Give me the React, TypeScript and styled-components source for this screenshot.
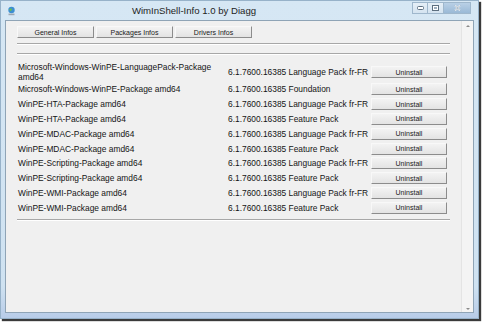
import React from 'react';
import styled, {createGlobalStyle} from 'styled-components';

const GlobalStyle = createGlobalStyle`
  html, body {
    margin: 0;
    padding: 0;
    background: #ffffff;
  }
  body {
    font-family: "Liberation Sans", Arial, sans-serif;
    color: #141414;
  }
`;

const Desktop = styled.div`
  width: 484px;
  height: 325px;
  overflow: hidden;
  background: #ffffff;
`;

const Window = styled.div`
  width: 479px;
  height: 319px;
  box-sizing: border-box;
  display: flex;
  flex-direction: column;
  background: linear-gradient(180deg, #d6e7f4 0%, #cfe2f1 90%, #b8cce8 100%);
  border: 1px solid #97b2c9;
  box-shadow: 2px 2px 1px #3a3a3a;
`;

const TitleBar = styled.div`
  height: 19px;
  display: flex;
  align-items: center;
  padding-left: 6px;
`;

const Title = styled.div`
  flex: 1;
  text-align: center;
  font-size: 9.6px;
  color: #1e1e1e;
  padding-right: 40px;
`;

const CaptionGroup = styled.div`
  display: flex;
  align-self: flex-start;
  margin-top: 1px;
  margin-right: 7px;
`;

const CaptionButton = styled.div<{$close?: boolean}>`
  width: ${p => (p.$close ? 27 : 16)}px;
  height: 12px;
  box-sizing: border-box;
  display: flex;
  align-items: center;
  justify-content: center;
  background: ${p => (p.$close ? 'linear-gradient(#b9d0e6, #9ab9d6)' : 'linear-gradient(#e6eff7, #d4e3f0)')};
  border: 1px solid #9fb7cc;
  border-left-width: 0;
  &:first-child {
    border-left-width: 1px;
  }
`;

const Client = styled.div`
  flex: 1;
  margin: 0 4px 5px 4px;
  display: flex;
  background: #f0f0f0;
  border: 1px solid #8fa4b6;
`;

const Content = styled.div`
  flex: 1;
  padding: 5px 0 0 11px;
`;

const TabRow = styled.div`
  display: flex;
  gap: 2px;
`;

const ClassicButton = styled.div<{$w: number}>`
  width: ${p => p.$w}px;
  height: 12px;
  box-sizing: border-box;
  display: flex;
  align-items: center;
  justify-content: center;
  font-size: 7px;
  color: #1a1a1a;
  background: linear-gradient(#f3f3f3, #e3e3e3);
  border-top: 1px solid #f8f8f8;
  border-left: 1px solid #f8f8f8;
  border-right: 1px solid #8c8c8c;
  border-bottom: 1px solid #8c8c8c;
`;

const Separator = styled.div<{$top: number}>`
  width: 433px;
  margin-top: ${p => p.$top}px;
  border-top: 1px solid #a7a7a7;
  border-bottom: 1px solid #ffffff;
`;

const PackageGrid = styled.div`
  display: grid;
  grid-template-columns: 211px 143px 76px;
  grid-auto-rows: minmax(14.8px, auto);
  align-items: center;
  margin-top: 7px;
  font-size: 8.4px;
`;

const NameCell = styled.div`
  line-height: 10px;
  padding-left: 1px;
  padding-right: 4px;
`;

const Word = styled.span`
  white-space: nowrap;
`;

const VersionCell = styled.div`
  white-space: nowrap;
`;

const Scrollbar = styled.div`
  width: 11px;
  display: flex;
  flex-direction: column;
  justify-content: space-between;
  align-items: center;
  padding: 4px 0 2px;
  background: #f4f4f4;
  border-left: 1px solid #e4e4e4;
`;

const Arrow = styled.div<{$down?: boolean}>`
  width: 0;
  height: 0;
  border-left: 2px solid transparent;
  border-right: 2px solid transparent;
  ${p => (p.$down ? 'border-top: 2px solid #8a8a8a;' : 'border-bottom: 2px solid #8a8a8a;')}
`;

const packages: [string, string][] = [
  ['Microsoft-Windows-WinPE-LanguagePack-Package amd64', '6.1.7600.16385 Language Pack fr-FR'],
  ['Microsoft-Windows-WinPE-Package amd64', '6.1.7600.16385 Foundation'],
  ['WinPE-HTA-Package amd64', '6.1.7600.16385 Language Pack fr-FR'],
  ['WinPE-HTA-Package amd64', '6.1.7600.16385 Feature Pack'],
  ['WinPE-MDAC-Package amd64', '6.1.7600.16385 Language Pack fr-FR'],
  ['WinPE-MDAC-Package amd64', '6.1.7600.16385 Feature Pack'],
  ['WinPE-Scripting-Package amd64', '6.1.7600.16385 Language Pack fr-FR'],
  ['WinPE-Scripting-Package amd64', '6.1.7600.16385 Feature Pack'],
  ['WinPE-WMI-Package amd64', '6.1.7600.16385 Language Pack fr-FR'],
  ['WinPE-WMI-Package amd64', '6.1.7600.16385 Feature Pack'],
];

function AppIcon() {
  return (
    <svg width="9" height="10" viewBox="0 0 9 10">
      <circle cx="4.5" cy="4" r="3.2" fill="#3d8fd1" />
      <path d="M2.2 3.2 L4.2 2.2 L5 4 L3.4 5.2 Z" fill="#6cbf4a" />
      <rect x="1.5" y="7.6" width="6" height="1.6" fill="#9aa7b3" />
    </svg>
  );
}

function App() {
  return (
    <Desktop>
      <GlobalStyle />
      <Window>
        <TitleBar>
          <AppIcon />
          <Title>WimInShell-Info 1.0 by Diagg</Title>
          <CaptionGroup>
            <CaptionButton>
              <svg width="7" height="4" viewBox="0 0 7 4">
                <rect x="0.5" y="0.5" width="6" height="3" rx="1" fill="#fff" stroke="#5d6f80" />
              </svg>
            </CaptionButton>
            <CaptionButton>
              <svg width="7" height="6" viewBox="0 0 7 6">
                <rect x="0.5" y="0.5" width="6" height="5" fill="#fff" stroke="#5d6f80" />
                <rect x="2" y="2" width="3" height="2" fill="#9fb0c0" />
              </svg>
            </CaptionButton>
            <CaptionButton $close>
              <svg width="7" height="6" viewBox="0 0 7 6">
                <path d="M1 0.5 L6 5.5 M6 0.5 L1 5.5" stroke="#ffffff" strokeWidth="1.6" />
                <path d="M1 0.5 L6 5.5 M6 0.5 L1 5.5" stroke="#6a7f93" strokeWidth="0.6" />
              </svg>
            </CaptionButton>
          </CaptionGroup>
        </TitleBar>
        <Client>
          <Content>
            <TabRow>
              <ClassicButton $w={77}>General Infos</ClassicButton>
              <ClassicButton $w={77}>Packages Infos</ClassicButton>
              <ClassicButton $w={77}>Drivers Infos</ClassicButton>
            </TabRow>
            <Separator $top={5} />
            <Separator $top={8} />
            <PackageGrid>
              {packages.map(([name, version], i) => (
                <React.Fragment key={i}>
                  <NameCell>
                    {name.split(' ').map((w, j) => (
                      <React.Fragment key={j}>
                        {j > 0 && ' '}
                        <Word>{w}</Word>
                      </React.Fragment>
                    ))}
                  </NameCell>
                  <VersionCell>{version}</VersionCell>
                  <ClassicButton $w={76}>Uninstall</ClassicButton>
                </React.Fragment>
              ))}
            </PackageGrid>
            <Separator $top={4} />
          </Content>
          <Scrollbar>
            <Arrow />
            <Arrow $down />
          </Scrollbar>
        </Client>
      </Window>
    </Desktop>
  );
}

export default App;
